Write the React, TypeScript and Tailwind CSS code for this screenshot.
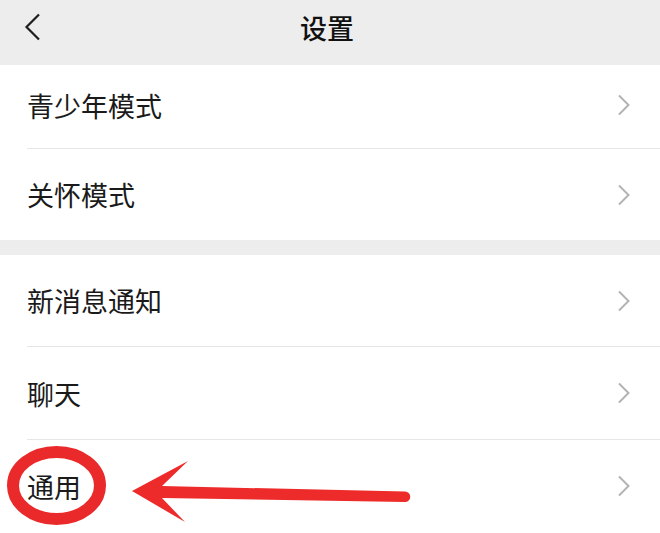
import React from "react";

const Chevron = () => (
  <svg width="14" height="22" viewBox="0 0 14 22" className="shrink-0">
    <path d="M2 1.5 L11.5 11 L2 20.5" fill="none" stroke="#b3b3b3" strokeWidth="2" />
  </svg>
);

const Row = ({ label, h, last, extraCls, children }: { label: string; h: string; last?: boolean; extraCls?: string; children?: React.ReactNode }) => (
  <div className={`relative flex flex-col bg-white`}>
    <div className={`flex items-center justify-between pl-[27px] pr-[29px] ${h} ${extraCls ?? ""}`}>
      <span className="text-[27px] leading-none text-[#1a1a1a]">{label}</span>
      <Chevron />
    </div>
    {!last && <div className="ml-[27px] h-px bg-[#e6e6e6]" />}
    {children}
  </div>
);

export default function App() {
  return (
    <div
      className="w-[660px] h-[533px] overflow-hidden bg-white flex flex-col"
      style={{ fontFamily: '"Noto Sans CJK SC", "Noto Sans", sans-serif' }}
    >
      <div className="h-[65px] bg-[#ededed] relative shrink-0">
        <div className="h-[54px] pl-[24px] flex items-center">
          <svg width="18" height="28" viewBox="0 0 18 28">
            <path d="M15 1.5 L2.5 14 L15 26.5" fill="none" stroke="#1f1f1f" strokeWidth="2.2" />
          </svg>
        </div>
        <div className="absolute left-0 right-0 top-0 h-[54px] flex items-center justify-center">
          <span className="text-[27px] font-medium leading-none text-[#111] ml-[-6px]">设置</span>
        </div>
      </div>
      <Row label="青少年模式" h="h-[83px]" extraCls="pb-[3px]" />
      <Row label="关怀模式" h="h-[91px]" last />
      <div className="h-[15px] bg-[#ededed] shrink-0" />
      <Row label="新消息通知" h="h-[91px]" />
      <Row label="聊天" h="h-[92px]" />
      <Row label="通用" h="h-[92px]" last>
        <svg className="absolute left-0 top-0" width="660" height="92" viewBox="0 0 660 92">
          <ellipse cx="56.5" cy="45.5" rx="43.5" ry="33.5" fill="none" stroke="#ea2a2a" strokeWidth="12" />
          <path
            d="M132 51 L188 21 L162 46 L405 51.5 A5.25 5.25 0 0 1 405 62 L162 58 L185 82 Z"
            fill="#ee2b2b"
          />
        </svg>
      </Row>
    </div>
  );
}
